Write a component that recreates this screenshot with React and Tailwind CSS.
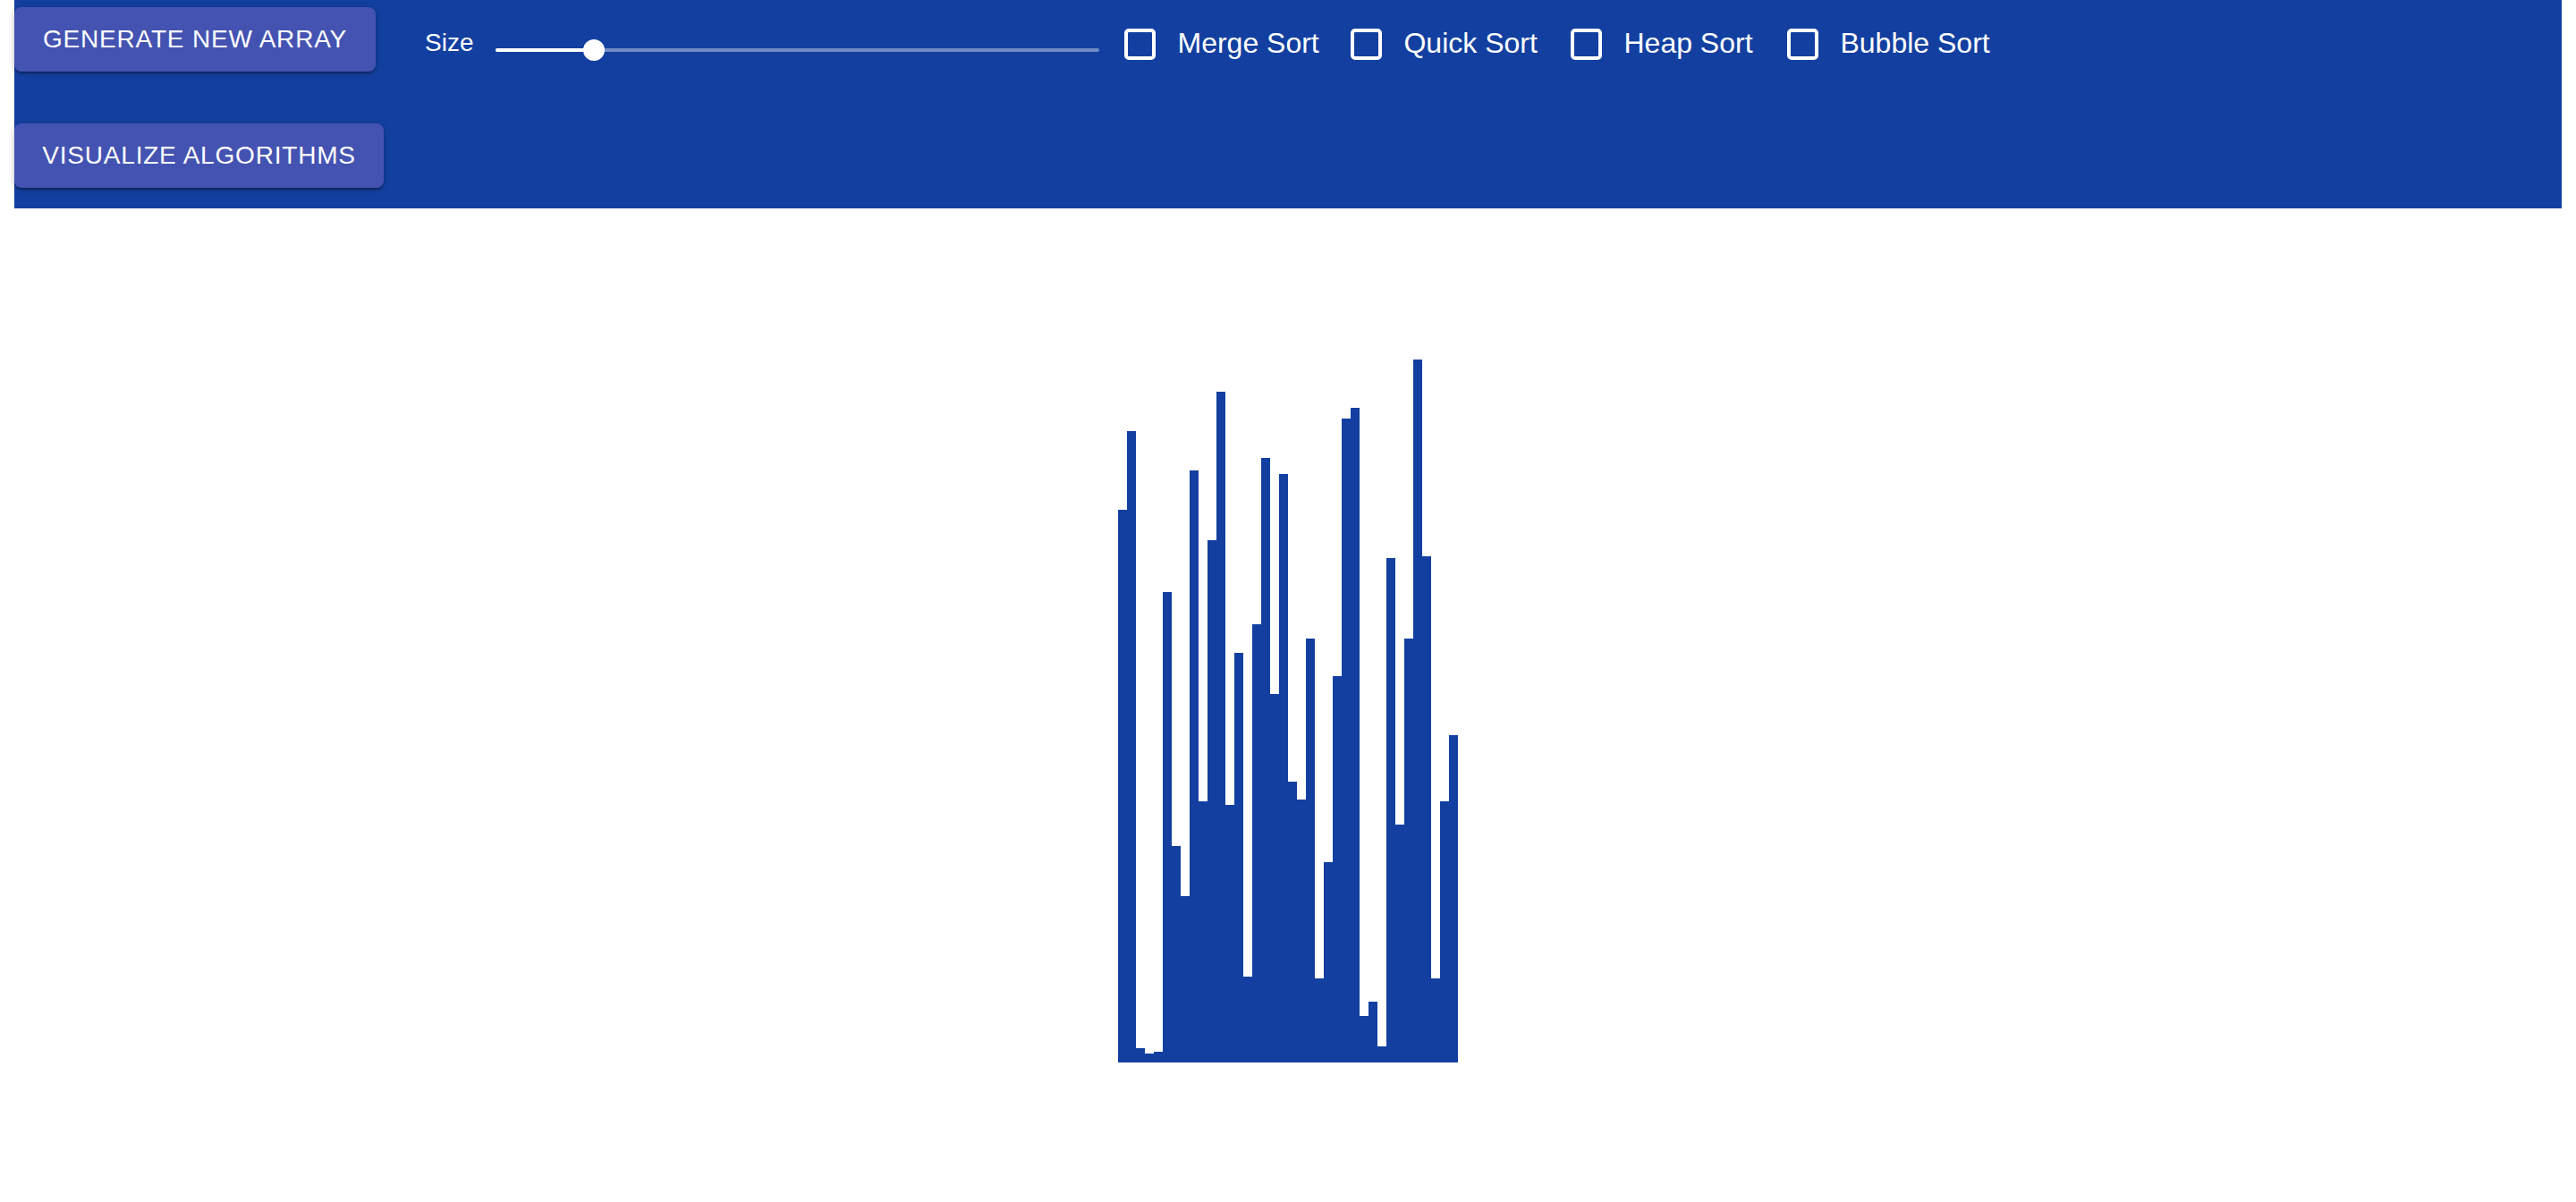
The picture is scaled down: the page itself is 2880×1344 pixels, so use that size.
import React from 'react';

const HEIGHTS = [
    618, 706, 16, 10, 12, 526, 242, 186, 662, 292, 584, 750, 288, 458, 96, 490, 676, 412, 658,
    314, 294, 474, 94, 224, 432, 720, 732, 52, 68, 18, 564, 266, 474, 786, 566, 94, 292, 366,
];

const SORTS = [
    { label: 'Merge Sort', width: 'w-[253px]' },
    { label: 'Quick Sort', width: 'w-[246px]' },
    { label: 'Heap Sort', width: 'w-[242px]' },
    { label: 'Bubble Sort', width: '' },
];

function ActionButton({ children, className = '' }) {
    return (
        <button
            type="button"
            className={`h-[72px] rounded-[8px] bg-[#4453b1] text-[28px] leading-none uppercase tracking-[0.8px] text-white shadow-[0_3px_2px_-1px_rgba(0,0,0,0.25),0_2px_4px_0_rgba(0,0,0,0.16),0_1px_10px_0_rgba(0,0,0,0.12)] ${className}`}
        >
            {children}
        </button>
    );
}

function SizeSlider() {
    return (
        <div className="relative ml-[25px] mt-[36px] h-[24px] w-[675px]">
            <div className="absolute left-0 right-0 top-[10px] h-[4px] rounded-full bg-white/40" />
            <div className="absolute left-0 top-[10px] h-[4px] w-[110px] rounded-full bg-white" />
            <div className="absolute left-[98px] top-0 h-[24px] w-[24px] rounded-full bg-white" />
        </div>
    );
}

function SortOption({ label, width }) {
    return (
        <label className={`flex items-start ${width}`}>
            <span className="h-[35px] w-[35px] rounded-[5px] border-[4px] border-white" />
            <span className="ml-[24px] text-[32px] leading-none text-white">{label}</span>
        </label>
    );
}

export default function App() {
    return (
        <div className="min-h-screen bg-white font-['Liberation_Sans',Arial,sans-serif]">
            {/* HEADER */}
            <div className="mx-[16px] h-[233px] bg-[#1340a0]">
                <div className="flex items-start pt-[8px]">
                    <ActionButton className="w-[404px]">Generate New Array</ActionButton>
                    <span className="ml-[55px] mt-[26px] text-[28px] leading-none text-white">Size</span>
                    <SizeSlider />
                    <div className="ml-[28px] mt-[24px] flex items-start">
                        {SORTS.map((s) => (
                            <SortOption key={s.label} label={s.label} width={s.width} />
                        ))}
                    </div>
                </div>
                <div className="mt-[58px]">
                    <ActionButton className="w-[413px]">Visualize Algorithms</ActionButton>
                </div>
            </div>

            {/* BARS */}
            <div className="flex h-[955px] items-end justify-center">
                {HEIGHTS.map((h, i) => (
                    <div key={i} className="w-[10px] bg-[#1340a0]" style={{ height: h }} />
                ))}
            </div>
        </div>
    );
}
